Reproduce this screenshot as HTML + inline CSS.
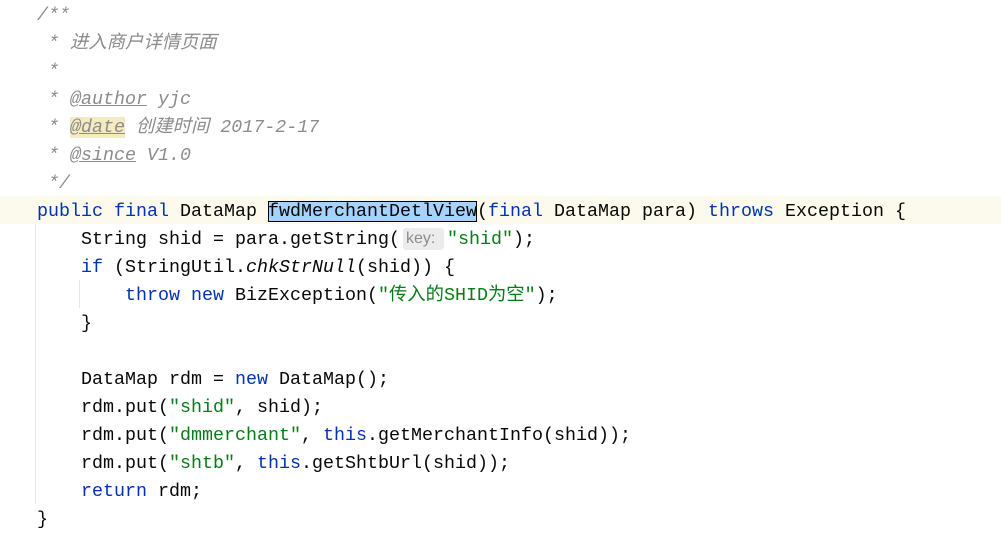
<!DOCTYPE html>
<html><head><meta charset="utf-8"><style>
html,body{margin:0;padding:0;background:#fff;width:1001px;height:539px;overflow:hidden}
.l{position:absolute;left:0;height:28px;line-height:28px;white-space:pre;font-family:"Liberation Mono","Noto Sans CJK SC",monospace;font-size:18.33px;color:#080808;margin-top:2px}
.c{color:#8c8c8c;font-style:italic}
.t{text-decoration:underline;text-decoration-color:#8c8c8c}
.k{color:#0033b3}
.s{color:#067d17}
.cur{background:#fcfaed;width:1001px;margin-top:0}
.hl{background:#a6d2ff;outline:1px solid #000;outline-offset:-1px}
.hint{display:inline-block;background:#ececec;color:#8c8c8c;font-family:"Liberation Sans",sans-serif;font-size:16px;border-radius:3px;padding:0 3px;margin:0 3px 0 3px;line-height:22px;height:22px;vertical-align:1px;width:35px;font-style:normal}
.g{position:absolute;width:1px;background:#e6e6e6}
</style></head><body>
<div class="l cur" style="top:196px"></div>
<div class="g" style="left:35px;top:224px;height:280px"></div>
<div class="g" style="left:79px;top:280px;height:28px"></div>
<div class="l" style="top:0;left:37px"><span class="c">/**</span></div>
<div class="l" style="top:28px;left:37px"><span class="c"> * 进入商户详情页面</span></div>
<div class="l" style="top:56px;left:37px"><span class="c"> *</span></div>
<div class="l" style="top:84px;left:37px"><span class="c"> * <span class="t">@author</span> yjc</span></div>
<div class="l" style="top:112px;left:37px"><span class="c"> * <span class="t" style="background:#f5eac1">@date</span> 创建时间 2017-2-17</span></div>
<div class="l" style="top:140px;left:37px"><span class="c"> * <span class="t">@since</span> V1.0</span></div>
<div class="l" style="top:168px;left:37px"><span class="c"> */</span></div>
<div class="l" style="top:196px;left:37px"><span class="k">public final</span> DataMap <span class="hl">fwdMerchantDetlView</span>(<span class="k">final</span> DataMap para) <span class="k">throws</span> Exception {</div>
<div class="l" style="top:224px;left:37px">    String shid = para.getString(<span class="hint">key:</span><span class="s">"shid"</span>);</div>
<div class="l" style="top:252px;left:37px">    <span class="k">if</span> (StringUtil.<i>chkStrNull</i>(shid)) {</div>
<div class="l" style="top:280px;left:37px">        <span class="k">throw new</span> BizException(<span class="s">"传入的SHID为空"</span>);</div>
<div class="l" style="top:308px;left:37px">    }</div>
<div class="l" style="top:364px;left:37px">    DataMap rdm = <span class="k">new</span> DataMap();</div>
<div class="l" style="top:392px;left:37px">    rdm.put(<span class="s">"shid"</span>, shid);</div>
<div class="l" style="top:420px;left:37px">    rdm.put(<span class="s">"dmmerchant"</span>, <span class="k">this</span>.getMerchantInfo(shid));</div>
<div class="l" style="top:448px;left:37px">    rdm.put(<span class="s">"shtb"</span>, <span class="k">this</span>.getShtbUrl(shid));</div>
<div class="l" style="top:476px;left:37px">    <span class="k">return</span> rdm;</div>
<div class="l" style="top:504px;left:37px">}</div>
</body></html>
